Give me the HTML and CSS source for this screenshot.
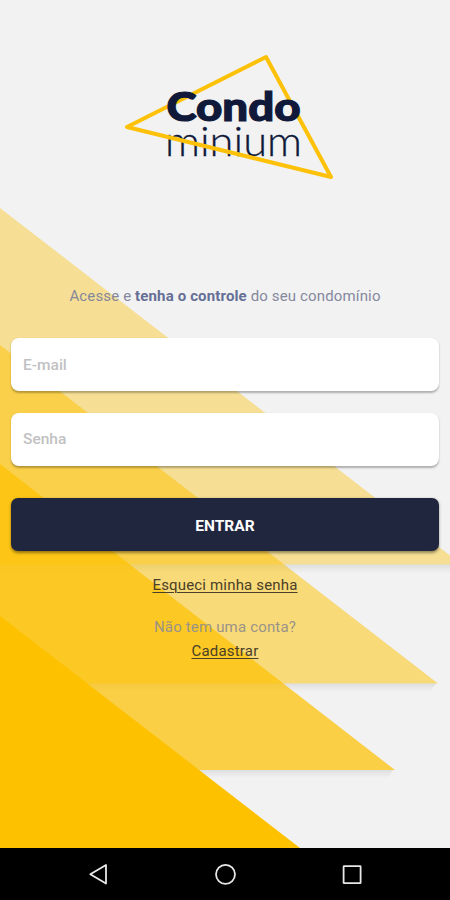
FILE: index.html
```html
<!DOCTYPE html>
<html lang="pt-BR">
<head>
    <meta charset="UTF-8">
    <meta name="viewport" content="width=device-width, initial-scale=1.0">
    <title>Condominium</title>
    <link rel="stylesheet" href="styles.css">
</head>
<body>

<!-- Fundo com os triângulos -->
<svg class="background" viewBox="0 0 450 848" aria-hidden="true">
    <defs>
        <linearGradient id="shade" x1="0" y1="0" x2="0" y2="1">
            <stop offset="0" stop-color="#000" stop-opacity="0.08"/>
            <stop offset="1" stop-color="#000" stop-opacity="0"/>
        </linearGradient>
    </defs>
    <polygon class="tri tri-1" points="0,208 450,555.5 462,564.5 0,564.5"/>
    <rect x="0" y="564.5" width="450" height="9" fill="url(#shade)"/>
    <polygon class="tri tri-2" points="0,345 438,683.5 0,683.5"/>
    <polygon points="0,683.5 436,683.5 430,692 0,692" fill="url(#shade)"/>
    <polygon class="tri tri-3" points="0,464 395,770 0,770"/>
    <polygon points="0,770 393,770 388,778 0,778" fill="url(#shade)"/>
    <polygon class="tri" points="0,616 300,848 0,848"/>
</svg>

<main class="login">
    <svg class="logo" width="214" height="130" viewBox="0 0 214 130" role="img" aria-label="Condominium">
        <text class="logo-light" x="47" y="106" textLength="137" lengthAdjust="spacingAndGlyphs">minium</text>
        <polygon class="logo-shape" points="9,77 148,7 213,127"/>
        <text class="logo-bold" x="48.5" y="70.5" textLength="134" lengthAdjust="spacingAndGlyphs">Condo</text>
    </svg>

    <p class="intro">Acesse e <strong>tenha o controle</strong> do seu condomínio</p>

    <form class="form" onsubmit="return false">
        <input type="text" placeholder="E-mail" aria-label="E-mail">
        <input type="password" placeholder="Senha" aria-label="Senha">
        <button type="submit">ENTRAR</button>
    </form>

    <a class="forgot" href="#">Esqueci minha senha</a>
    <p class="question">Não tem uma conta?</p>
    <a class="register" href="#">Cadastrar</a>
</main>

<!-- Barra de navegação do Android -->
<nav class="navbar">
    <svg viewBox="0 0 24 24"><path d="M19 3v18.6L3.3 12.3z"/></svg>
    <svg viewBox="0 0 24 24"><circle cx="12.5" cy="12.3" r="9.5"/></svg>
    <svg viewBox="0 0 24 24"><rect x="4.6" y="4.2" width="17" height="17" rx="0.5"/></svg>
</nav>

</body>
</html>
```
FILE: styles.css
```css
* {
    box-sizing: border-box;
}
body {
    margin: 0;
    height: 900px;
    display: flex;
    flex-direction: column;
    overflow: hidden;
    background-color: #f2f2f2;
    font-family: Roboto, sans-serif;
}
.background {
    position: absolute;
    top: 0;
    left: 0;
    width: 450px;
    height: 848px;
    z-index: -1;
}
.tri {
    fill: #fdc100;
}
.tri-1 {
    fill-opacity: 0.39;
}
.tri-2 {
    fill-opacity: 0.5;
}
.tri-3 {
    fill-opacity: 0.71;
}
.login {
    height: 848px;
    padding: 50px 11px 0;
    display: flex;
    flex-direction: column;
    align-items: center;
}
.logo {
    display: block;
    overflow: visible;
}
.logo text {
    font-family: Lato, sans-serif;
    fill: #10193a;
    stroke: #10193a;
}
.logo-bold {
    font-size: 39px;
    font-weight: 900;
    stroke-width: 1.2;
}
.logo-light {
    font-size: 41px;
    font-weight: 300;
    stroke-width: 0.3;
}
.logo-shape {
    fill: none;
    stroke: #fdc10a;
    stroke-width: 4;
    stroke-linejoin: round;
}
.intro {
    margin: 106px 0 0;
    font-size: 15px;
    line-height: 20px;
    letter-spacing: 0.14px;
    color: #85889d;
    white-space: nowrap;
}
.intro strong {
    font-weight: 700;
    color: #656f96;
}
.form {
    width: 100%;
    margin-top: 32px;
    display: flex;
    flex-direction: column;
}
.form input {
    height: 53px;
    margin-bottom: 21.5px;
    padding: 0 12px;
    border: none;
    border-radius: 8px;
    background-color: #fff;
    box-shadow: 0 1.5px 2px rgba(0, 0, 0, 0.28);
    font-family: inherit;
    font-size: 15.5px;
    font-weight: 500;
}
.form input::placeholder {
    color: #c1c1c3;
}
.form button {
    height: 53px;
    margin-top: 11px;
    padding-top: 3px;
    border: none;
    border-radius: 7px;
    background-color: #20263e;
    box-shadow: 0 1.5px 3px rgba(0, 0, 0, 0.4);
    color: #fff;
    font-family: inherit;
    font-size: 15.5px;
    font-weight: 700;
    line-height: 20px;
}
.forgot,
.register {
    font-size: 15px;
    line-height: 20px;
    color: #4a4027;
    text-underline-offset: 2px;
    text-decoration-thickness: 1px;
}
.forgot {
    margin-top: 24px;
    letter-spacing: 0.17px;
}
.question {
    margin: 22px 0 0;
    font-size: 15px;
    line-height: 20px;
    letter-spacing: 0.17px;
    color: #9a9388;
}
.register {
    margin-top: 4px;
    letter-spacing: 0.2px;
}
.navbar {
    height: 52px;
    padding: 0 87px;
    display: flex;
    justify-content: space-between;
    align-items: center;
    background-color: #000;
}
.navbar svg {
    width: 24px;
    height: 24px;
    fill: none;
    stroke: #e8e8e8;
    stroke-width: 1.8;
    stroke-linejoin: round;
}
```
